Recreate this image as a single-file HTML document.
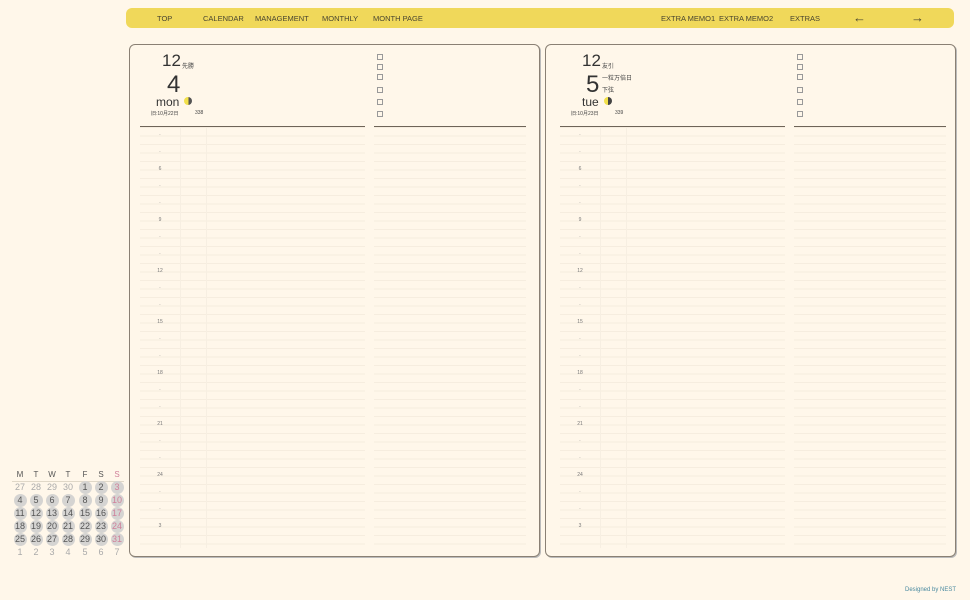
<!DOCTYPE html>
<html><head><meta charset="utf-8"><style>
body{margin:0;width:970px;height:600px;background:#fff7ea;font-family:"Liberation Sans","Noto Sans CJK JP",sans-serif;position:relative;overflow:hidden;color:#444}
.nav{position:absolute;left:126px;top:8px;width:828px;height:20px;background:#f0d85a;border-radius:6px}
.nav span{position:absolute;top:6px;font-size:7.5px;color:#4a4630;white-space:nowrap}
.page{position:absolute;top:44px;width:409px;height:511px;border:1px solid #8a8074;border-radius:6px;background:#fff7ea;box-shadow:1px 1px 0 #bbb}
.a{position:absolute;white-space:nowrap}
.grid{position:absolute;top:82px;height:421px;background:repeating-linear-gradient(to bottom,#f6eddf 0,#f6eddf 1px,transparent 1px,transparent 8.5px)}
.hr{position:absolute;top:81px;height:1px;background:#6e6458}
.vl{position:absolute;top:83px;height:420px;width:1px;background:#f7efe2}
.lab{position:absolute;font-size:5px;color:#777;width:20px;text-align:center}
.cb{position:absolute;width:4px;height:4px;border:0.7px solid #999}
.cal span{position:absolute;width:13px;height:13px;line-height:13px;text-align:center;font-size:9px;color:#555;border-radius:50%}
.cal .c{background:#d5d4d2}
.cal .r{color:#d0809a}
.cal .g{color:#aaa}
</style></head><body>
<div class="nav">
<span style="left:31px">TOP</span><span style="left:77px">CALENDAR</span><span style="left:129px">MANAGEMENT</span><span style="left:196px">MONTHLY</span><span style="left:247px">MONTH PAGE</span>
<span style="left:535px">EXTRA MEMO1</span><span style="left:593px">EXTRA MEMO2</span><span style="left:664px">EXTRAS</span>
<span style="left:727px;top:2px;font-size:13px">←</span><span style="left:785px;top:2px;font-size:13px">→</span>
</div>

<div class="page" id="p1" style="left:129px">
<div class="a" style="left:32px;top:6px;font-size:17px;color:#333">12</div>
<div class="a" style="left:52px;top:16px;font-size:6px">先勝</div>
<div class="a" style="left:37px;top:26px;font-size:24px;color:#333">4</div>
<div class="a" style="left:26px;top:50px;font-size:12px;color:#333">mon</div>
<div class="a" style="left:54px;top:52px;width:8px;height:8px;border-radius:50%;background:linear-gradient(to right,#f2e04a 55%,#555 55%)"></div>
<div class="a" style="left:21px;top:65px;font-size:5px">旧:10月22日</div>
<div class="a" style="left:65px;top:65px;font-size:5px">338</div>
</div>
<div class="page" id="p2" style="left:545px">
<div class="a" style="left:36px;top:6px;font-size:17px;color:#333">12</div>
<div class="a" style="left:56px;top:16px;font-size:6px">友引</div>
<div class="a" style="left:56px;top:28px;font-size:6px">一粒万倍日</div>
<div class="a" style="left:40px;top:26px;font-size:24px;color:#333">5</div>
<div class="a" style="left:56px;top:40px;font-size:6px">下弦</div>
<div class="a" style="left:36px;top:50px;font-size:12px;color:#333">tue</div>
<div class="a" style="left:58px;top:52px;width:8px;height:8px;border-radius:50%;background:linear-gradient(to right,#f2e04a 50%,#444 50%)"></div>
<div class="a" style="left:25px;top:65px;font-size:5px">旧:10月23日</div>
<div class="a" style="left:69px;top:65px;font-size:5px">339</div>
</div>

<div class="cal" id="cal"></div>
<div class="a" style="left:905px;top:587px;font-size:6px;color:#4a8aa0">Designed by NEST</div>

<script>
function build(p,o){
  var h='';
  h+='<div class="hr" style="left:'+(10+o)+'px;width:225px"></div><div class="hr" style="left:'+(244+o)+'px;width:152px"></div>';
  h+='<div class="grid" style="left:'+(10+o)+'px;width:225px"></div><div class="grid" style="left:'+(244+o)+'px;width:152px"></div>';
  h+='<div class="vl" style="left:'+(50+o)+'px"></div><div class="vl" style="left:'+(76+o)+'px"></div>';
  var ys=[9,19,29,42,54,66];
  ys.forEach(function(y){h+='<div class="cb" style="left:'+(247+o)+'px;top:'+y+'px"></div>';});
  for(var k=0;k<24;k++){var hr=4+k;var t=(hr%3==0)?String(hr>24?hr-24:hr):'·';
    h+='<div class="lab" style="left:'+(20+o)+'px;top:'+(87+17*k)+'px">'+t+'</div>';}
  p.insertAdjacentHTML('beforeend',h);
}
build(document.getElementById('p1'),0);build(document.getElementById('p2'),4);
var c=document.getElementById('cal'),xs=[20,36,52,68,85,101,117],h='';
var hd=['M','T','W','T','F','S','S'];
hd.forEach(function(d,i){h+='<span style="left:'+(xs[i]-6.5)+'px;top:468px;font-size:8px" class="'+(i==6?'r':'')+'">'+d+'</span>';});
h+='<div style="position:absolute;left:12px;top:481px;width:112px;height:1px;background:#e0d8c8"></div>';
var rows=[[27,28,29,30,1,2,3],[4,5,6,7,8,9,10],[11,12,13,14,15,16,17],[18,19,20,21,22,23,24],[25,26,27,28,29,30,31],[1,2,3,4,5,6,7]];
rows.forEach(function(r,ri){r.forEach(function(d,i){
  var inm=!((ri==0&&i<4)||ri==5);var cls=inm?'c':'g';if(inm&&i==6)cls+=' r';
  h+='<span class="'+cls+'" style="left:'+(xs[i]-6.5)+'px;top:'+(481+13*ri)+'px">'+d+'</span>';});});
c.innerHTML=h;
</script>
</body></html>
